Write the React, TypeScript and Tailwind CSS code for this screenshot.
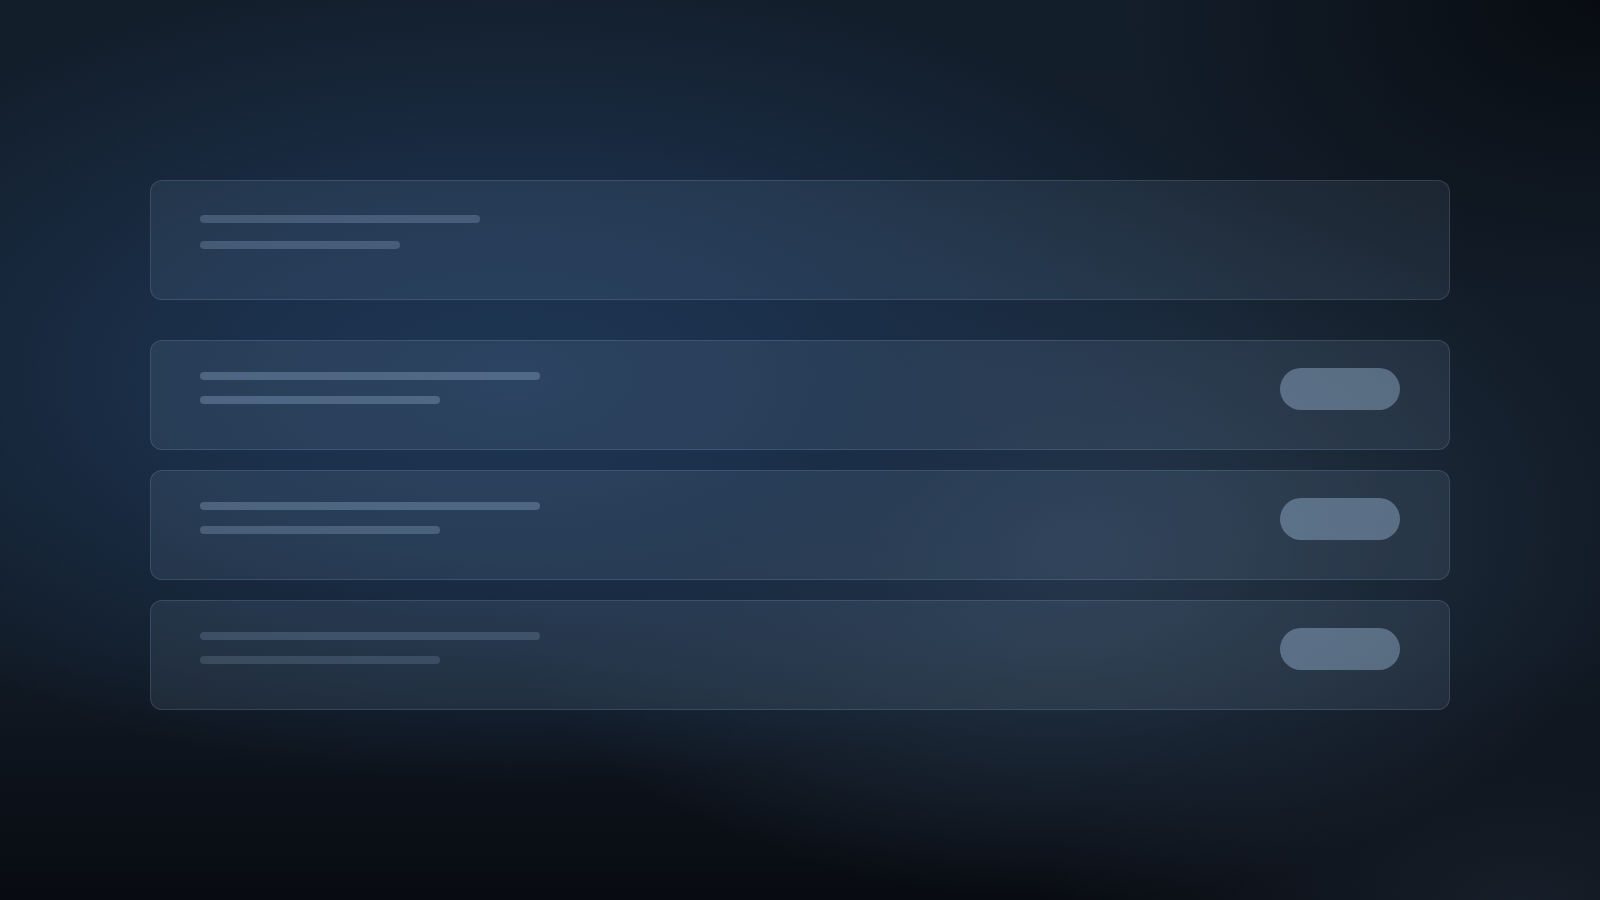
const rows = [
  { long: 'w-[340px] bg-[#a7c1df]/30', short: 'w-[240px] bg-[#a7c1df]/30' },
  { long: 'w-[340px] bg-[#a7c1df]/30', short: 'w-[240px] bg-[#a7c1df]/[0.27]' },
  { long: 'w-[340px] bg-[#a7c1df]/20', short: 'w-[240px] bg-[#a7c1df]/[0.18]' },
];

const Row = ({ long, short }: { long: string; short: string }) => (
  <div className="flex h-[110px] items-start justify-between rounded-xl border border-[#9cb8da]/[0.18] bg-[#a9c4e6]/[0.1] px-[49px] pt-[27px]">
    <div className="flex flex-col gap-4 pt-1">
      <div className={`h-2 rounded-full ${long}`} />
      <div className={`h-2 rounded-full ${short}`} />
    </div>
    <div className="h-[42px] w-[120px] rounded-full bg-[#a6c2e2]/40" />
  </div>
);

export default function App() {
  return (
    <div className="relative h-[900px] w-[1600px] overflow-hidden bg-[radial-gradient(ellipse_30%_35%_at_100%_0%,#080c11_0%,transparent_100%),radial-gradient(ellipse_50%_45%_at_32%_42%,#1e3654_0%,#1a2e47_45%,transparent_100%),radial-gradient(ellipse_36%_40%_at_66%_60%,#283a4f_0%,transparent_100%),radial-gradient(ellipse_30%_25%_at_95%_100%,#161e29_0%,transparent_100%),linear-gradient(180deg,#131e2b_0%,#111a25_72%,#080b11_100%)]">
      <div className="flex flex-col px-[150px] pt-[180px]">
        <div className="h-[120px] rounded-xl border border-[#9cb8da]/[0.18] bg-[#a9c4e6]/[0.09] px-[49px] pt-[34px]">
          <div className="flex flex-col gap-[18px]">
            <div className="h-2 w-[280px] rounded-full bg-[#a7c1df]/25" />
            <div className="h-2 w-[200px] rounded-full bg-[#a7c1df]/25" />
          </div>
        </div>

        <div className="mt-10 flex flex-col gap-5">
          {rows.map((r, i) => (
            <Row key={i} long={r.long} short={r.short} />
          ))}
        </div>
      </div>
    </div>
  );
}
